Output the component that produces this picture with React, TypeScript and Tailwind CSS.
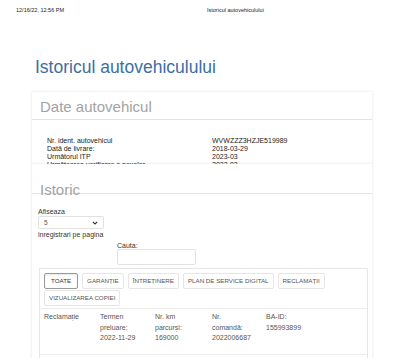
import React from "react";

const vehicleRows = [
  ["Nr. ident. autovehicul", "WVWZZZ3HZJE519989"],
  ["Dată de livrare:", "2018-03-29"],
  ["Următorul ITP", "2023-03"],
  ["Următoarea verificare a noxelor", "2023-03"],
];

const tabs = ["GARANȚIE", "ÎNTREȚINERE", "PLAN DE SERVICE DIGITAL", "RECLAMAȚII", "VIZUALIZAREA COPIEI"];

const columns = [
  { w: "w-[56px]", lines: ["Reclamație"] },
  { w: "w-[55px]", lines: ["Termen", "preluare:", "2022-11-29"] },
  { w: "w-[57px]", lines: ["Nr. km", "parcurși:", "169000"] },
  { w: "w-[54px]", lines: ["Nr.", "comandă:", "2022006687"] },
  { w: "w-[60px]", lines: ["BA-ID:", "155993899"] },
];

function App() {
  return (
    <div className="w-[400px] h-[358px] overflow-hidden bg-white font-['Liberation_Sans',Arial,sans-serif] text-[#333]">
      {/* print header */}
      <div className="flex pt-[7px] pl-[16px] text-[5.5px] leading-[6px] text-[#222]">
        <span className="w-[191px]">12/16/22, 12:56 PM</span>
        <span>Istoricul autovehiculului</span>
      </div>

      <h1 className="mt-[46px] pl-[35px] h-[18px] text-[17.5px] leading-none text-[#3d6ea3]">
        Istoricul autovehiculului
      </h1>

      {/* Date autovehicul */}
      <div className="mt-[15px] ml-[32px] w-[340px] h-[72px] overflow-hidden bg-white shadow-[0_0_3px_rgba(0,0,0,0.12)]">
        <div className="h-[28px] pt-[7px] pl-[8px] border-b border-[#dbe4e9]">
          <h2 className="text-[15px] leading-none text-[#a3a3a3]">Date autovehicul</h2>
        </div>
        <div className="pt-[17px] pl-[15px] text-[7px] leading-[8px] text-[#222]">
          {vehicleRows.map(([label, value]) => (
            <div key={label} className="flex">
              <span className="w-[165px]">{label}</span>
              <span>{value}</span>
            </div>
          ))}
        </div>
      </div>

      {/* Istoric */}
      <div className="relative ml-[32px] w-[340px] bg-white shadow-[0_0_3px_rgba(0,0,0,0.12)]">
        <div className="h-[30px] pt-[18px] pl-[8px] border-b border-[#dbe4e9]">
          <h2 className="text-[15px] leading-none text-[#a3a3a3]">Istoric</h2>
        </div>
        <div className="pt-[14px] pl-[6px] pr-[4px] pb-[20px] text-[7px] leading-[8px] text-[#333]">
          <div>Afiseaza</div>
          <div className="flex items-center justify-between w-[66px] h-[13px] px-[5px] border border-[#e2e2e2] rounded-[2px] text-[6.5px] text-[#555]">
            <span>5</span>
            <svg width="6" height="4" viewBox="0 0 6 4" fill="none">
              <path d="M0.8 0.8 L3 3 L5.2 0.8" stroke="#333" strokeWidth="1.1" />
            </svg>
          </div>
          <div className="mt-[2px]">inregistrari pe pagina</div>
          <div className="mt-[3px] pl-[79px] leading-[7px]">Cauta:</div>
          <div className="ml-[79px] w-[79px] h-[16px] border border-[#e2e2e2] rounded-[2px]" />

          <div className="mt-[3px] ml-[1px] w-[329px] border border-[#e6e6e6]">
            <div className="flex flex-wrap gap-x-[4px] gap-y-[1px] pt-[4px] pl-[4px] pb-[2px] border-b border-[#ececec]">
              <button className="h-[16px] px-[6px] border border-[#9a9a9a] rounded-[2px] text-[6.2px] leading-none text-[#333] shadow-[inset_0_1px_2px_rgba(0,0,0,0.1)]">
                TOATE
              </button>
              {tabs.map((t) => (
                <button
                  key={t}
                  className="h-[16px] px-[4px] border border-[#e6e6e6] rounded-[2px] text-[6.2px] leading-none text-[#555]"
                >
                  {t}
                </button>
              ))}
            </div>
            <div className="flex pt-[3px] pl-[4px] pb-[10px] border-b border-[#ececec] text-[7px] leading-[10.5px] text-[#555]">
              {columns.map((c, i) => (
                <div key={i} className={c.w}>
                  {c.lines.map((l) => (
                    <div key={l}>{l}</div>
                  ))}
                </div>
              ))}
            </div>
            <div className="h-[20px]" />
          </div>
        </div>
      </div>
    </div>
  );
}

export default App;
